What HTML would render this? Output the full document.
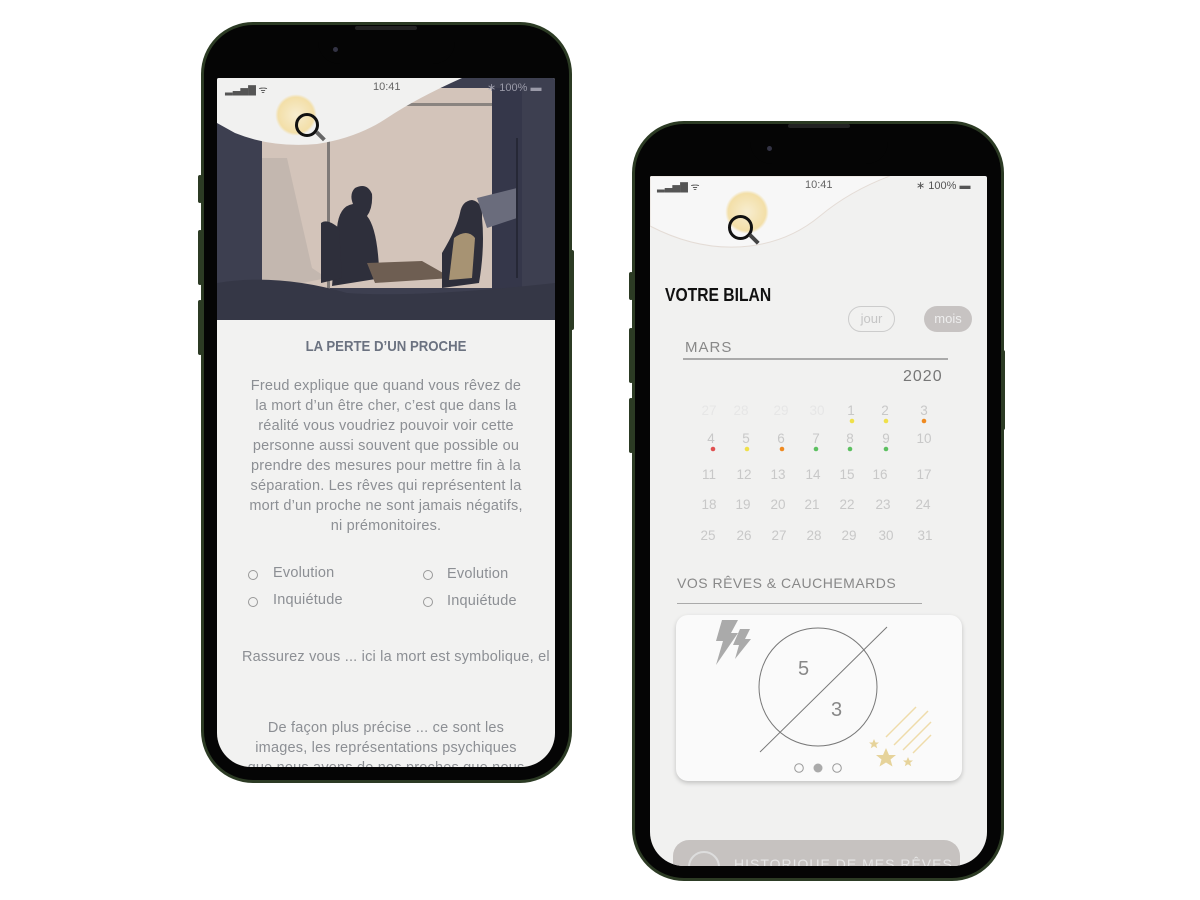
<!DOCTYPE html>
<html><head><meta charset="utf-8"><style>
*{margin:0;padding:0;box-sizing:border-box}
body{width:1200px;height:900px;background:#fff;position:relative;overflow:hidden;font-family:"Liberation Sans","DejaVu Sans",sans-serif}
.a{position:absolute}
.frame{position:absolute;background:#2c3b24;border-radius:52px}
.bez{position:absolute;left:3px;top:3px;right:3px;bottom:3px;background:#050505;border-radius:49px}
.scr{position:absolute;overflow:hidden;background:#f2f2f1;border-radius:2px 2px 34px 34px}
.notch{position:absolute;background:#050505;border-radius:0 0 22px 22px}
.t{position:absolute;white-space:nowrap}
.btn{position:absolute;background:#2c3b24;width:4px;border-radius:2px}
.body{font-size:14.5px;letter-spacing:.2px;line-height:20px;color:#8c8f94;text-align:center}
</style></head><body>

<!-- LEFT PHONE -->
<div class="btn" style="left:198px;top:175px;height:28px"></div>
<div class="btn" style="left:198px;top:230px;height:55px"></div>
<div class="btn" style="left:198px;top:300px;height:55px"></div>
<div class="btn" style="left:570px;top:250px;height:80px"></div>
<div class="frame" style="left:201px;top:22px;width:371px;height:761px"><div class="bez"></div></div>
<div class="a" style="left:355px;top:26px;width:62px;height:4px;background:#222;border-radius:2px"></div>
<div class="scr" style="left:217px;top:78px;width:338px;height:689px">
 <svg class="a" style="left:0;top:0" width="338" height="242" viewBox="0 0 338 242">
  <rect width="338" height="242" fill="#3d3f50"/>
  <rect x="45" y="10" width="240" height="200" fill="#d3c4ba"/>
  <rect x="110" y="40" width="3" height="172" fill="#7f7a78"/>
  <rect x="45" y="25" width="240" height="3" fill="#8a8480"/>
  <path d="M45 80 L70 80 L95 190 L110 200 L60 210 L45 210Z" fill="#bfb4ac" opacity=".8"/>
  <rect x="275" y="10" width="30" height="210" fill="#35374a"/>
  <path d="M120 150 Q122 128 136 126 Q132 116 138 110 Q150 104 155 116 Q156 130 150 138 Q160 150 162 190 L165 200 L115 208Z" fill="#2e2f3b"/>
  <path d="M104 145 Q110 140 122 150 L125 200 L104 205Z" fill="#2e2f3b"/>
  <path d="M150 185 L205 183 L235 200 L158 205Z" fill="#6e5e52"/>
  <path d="M225 175 Q240 150 243 135 Q245 123 255 122 Q266 124 265 140 Q268 170 262 205 L225 210Z" fill="#2e2f3b"/>
  <path d="M237 160 Q250 150 258 160 L255 200 L232 202Z" fill="#c6ad82" opacity=".8"/>
  <path d="M260 120 L300 110 L300 140 L270 150Z" fill="#6a6c7c"/>
  <path d="M0 205 Q60 195 130 215 Q200 220 338 205 L338 242 L0 242Z" fill="#353746"/>
  <path d="M0 0 L245 0 Q200 20 170 40 Q140 60 100 66 Q55 70 18 55 L0 45Z" fill="#f1f1f0"/>
  <line x1="300" y1="60" x2="300" y2="200" stroke="#262836" stroke-width="2"/>
 </svg>
 <div class="t" style="left:8px;top:4px;font-size:10px;color:#555">▂▃▅▇ ᯤ</div>
 <div class="t" style="left:156px;top:3px;font-size:11px;color:#666">10:41</div>
 <div class="t" style="left:270px;top:3px;font-size:11px;color:#9a9aa8">∗ 100% ▬</div>
 <div class="a" style="left:58px;top:16px;width:42px;height:42px;border-radius:50%;background:radial-gradient(circle,#f7edd0 0,#f3dfa8 60%,rgba(255,255,255,0) 70%)"></div>
 <div class="a" style="left:78px;top:35px;width:24px;height:24px;border-radius:50%;border:3px solid #111"></div>
 <div class="a" style="left:98px;top:56px;width:11px;height:4px;background:#666;transform:rotate(45deg)"></div>
 <div class="t" style="left:0;width:338px;top:260px;text-align:center;font-weight:bold;font-size:15px;color:#6b7280;transform:scaleX(.88)">LA PERTE D’UN PROCHE</div>
 <div class="a body" style="left:26px;width:286px;top:298px">Freud explique que quand vous rêvez de la mort d’un être cher, c’est que dans la réalité vous voudriez pouvoir voir cette personne aussi souvent que possible ou prendre des mesures pour mettre fin à la séparation. Les rêves qui représentent la mort d’un proche ne sont jamais négatifs, ni prémonitoires.</div>
 <div class="a" style="left:31px;top:492px;width:10px;height:10px;border:1px solid #999;border-radius:50%"></div>
 <div class="a" style="left:31px;top:519px;width:10px;height:10px;border:1px solid #999;border-radius:50%"></div>
 <div class="a" style="left:206px;top:492px;width:10px;height:10px;border:1px solid #999;border-radius:50%"></div>
 <div class="a" style="left:206px;top:519px;width:10px;height:10px;border:1px solid #999;border-radius:50%"></div>
 <div class="t" style="left:56px;top:487px;font-size:14.5px;letter-spacing:.2px;color:#8c8f94">Evolution</div>
 <div class="t" style="left:56px;top:514px;font-size:14.5px;letter-spacing:.2px;color:#8c8f94">Inquiétude</div>
 <div class="t" style="left:230px;top:488px;font-size:14.5px;letter-spacing:.2px;color:#8c8f94">Evolution</div>
 <div class="t" style="left:230px;top:515px;font-size:14.5px;letter-spacing:.2px;color:#8c8f94">Inquiétude</div>
 <div class="t" style="left:25px;top:571px;font-size:14.5px;letter-spacing:.2px;color:#8c8f94">Rassurez vous ... ici la mort est symbolique, el</div>
 <div class="a body" style="left:26px;width:286px;top:640px">De façon plus précise ... ce sont les images, les représentations psychiques que nous avons de nos proches que nous</div>
</div>
<div class="notch" style="left:318px;top:36px;width:137px;height:28px"></div>
<div class="a" style="left:333px;top:47px;width:5px;height:5px;background:#334;border-radius:50%"></div>

<!-- RIGHT PHONE -->
<div class="btn" style="left:629px;top:272px;height:28px"></div>
<div class="btn" style="left:629px;top:328px;height:55px"></div>
<div class="btn" style="left:629px;top:398px;height:55px"></div>
<div class="btn" style="left:1001px;top:350px;height:80px"></div>
<div class="frame" style="left:632px;top:121px;width:372px;height:760px"><div class="bez"></div></div>
<div class="a" style="left:788px;top:124px;width:62px;height:4px;background:#222;border-radius:2px"></div>
<div class="scr" style="left:650px;top:176px;width:337px;height:690px;background:#f1f1f0">
 <svg class="a" style="left:0;top:0" width="337" height="90" viewBox="0 0 337 90">
  <path d="M0 0 L240 0 Q200 15 170 40 Q140 65 100 70 Q50 76 0 50Z" fill="#f7f7f7" stroke="#e4dcd6" stroke-width="1"/>
 </svg>
 <div class="t" style="left:7px;top:3px;font-size:10px;color:#555">▂▃▅▇ ᯤ</div>
 <div class="t" style="left:155px;top:3px;font-size:11px;color:#666">10:41</div>
 <div class="t" style="left:266px;top:3px;font-size:11px;color:#555">∗ 100% ▬</div>
 <div class="a" style="left:75px;top:14px;width:44px;height:44px;border-radius:50%;background:radial-gradient(circle,#f7edd0 0,#f3dfa8 60%,rgba(255,255,255,0) 70%)"></div>
 <div class="a" style="left:78px;top:39px;width:25px;height:25px;border-radius:50%;border:3px solid #111"></div>
 <div class="a" style="left:98px;top:61px;width:12px;height:4px;background:#444;transform:rotate(45deg)"></div>
 <div class="t" style="left:15px;top:109px;font-weight:bold;font-size:18px;color:#111;transform:scaleX(.87);transform-origin:left">VOTRE BILAN</div>
 <div class="t" style="left:198px;top:130px;width:47px;height:26px;border:1px solid #ccc;border-radius:13px;text-align:center;line-height:24px;font-size:13px;color:#c5c5c5">jour</div>
 <div class="t" style="left:274px;top:130px;width:48px;height:26px;background:#c7c3c2;border-radius:13px;text-align:center;line-height:26px;font-size:13px;color:#eee">mois</div>
 <div class="t" style="left:35px;top:163px;font-size:15px;letter-spacing:1px;color:#888">MARS</div>
 <div class="a" style="left:33px;top:182px;width:265px;height:2px;background:#aaa"></div>
 <div class="t" style="left:253px;top:192px;font-size:16px;letter-spacing:1px;color:#777">2020</div>
 <svg class="a" style="left:0;top:220px" width="337" height="150" font-family="Liberation Sans, sans-serif" font-size="13.5" text-anchor="middle">
  <g fill="#e6e6e6"><text x="59" y="19">27</text><text x="91" y="19">28</text><text x="131" y="19">29</text><text x="167" y="19">30</text></g>
  <g fill="#c8c8c8">
  <text x="201" y="19">1</text><text x="235" y="19">2</text><text x="274" y="19">3</text>
  <text x="61" y="47">4</text><text x="96" y="47">5</text><text x="131" y="47">6</text><text x="166" y="47">7</text><text x="200" y="47">8</text><text x="236" y="47">9</text><text x="274" y="47">10</text>
  <text x="59" y="83">11</text><text x="94" y="83">12</text><text x="128" y="83">13</text><text x="163" y="83">14</text><text x="197" y="83">15</text><text x="230" y="83">16</text><text x="274" y="83">17</text>
  <text x="59" y="113">18</text><text x="93" y="113">19</text><text x="128" y="113">20</text><text x="162" y="113">21</text><text x="197" y="113">22</text><text x="233" y="113">23</text><text x="273" y="113">24</text>
  <text x="58" y="144">25</text><text x="94" y="144">26</text><text x="129" y="144">27</text><text x="164" y="144">28</text><text x="199" y="144">29</text><text x="236" y="144">30</text><text x="275" y="144">31</text></g>
  <circle cx="202" cy="25" r="2.3" fill="#efe04a"/><circle cx="236" cy="25" r="2.3" fill="#efe04a"/><circle cx="274" cy="25" r="2.3" fill="#ef8a20"/>
  <circle cx="63" cy="53" r="2.3" fill="#e05050"/><circle cx="97" cy="53" r="2.3" fill="#efe04a"/><circle cx="132" cy="53" r="2.3" fill="#ef8a20"/><circle cx="166" cy="53" r="2.3" fill="#5cc060"/><circle cx="200" cy="53" r="2.3" fill="#5cc060"/><circle cx="236" cy="53" r="2.3" fill="#5cc060"/>
 </svg>
 <div class="t" style="left:27px;top:399px;font-size:14px;letter-spacing:.5px;color:#888">VOS RÊVES &amp; CAUCHEMARDS</div>
 <div class="a" style="left:27px;top:427px;width:245px;height:1px;background:#aaa"></div>
 <div class="a" style="left:26px;top:439px;width:286px;height:166px;background:#fafafa;border-radius:12px;box-shadow:0 2px 5px rgba(0,0,0,.2)"></div>
 <svg class="a" style="left:26px;top:439px" width="286" height="166">
  <path d="M46 5 L62 5 L55 18 L62 18 L40 50 L47 26 L40 26Z" fill="#aaa"/>
  <path d="M64 14 L74 14 L69 24 L75 24 L59 44 L63 30 L57 30Z" fill="#aaa"/>
  <circle cx="142" cy="72" r="59" fill="none" stroke="#777" stroke-width="1"/>
  <line x1="84" y1="137" x2="211" y2="12" stroke="#777" stroke-width="1"/>
  <text x="122" y="60" font-size="20" fill="#888" font-family="Liberation Sans,sans-serif">5</text>
  <text x="155" y="101" font-size="20" fill="#888" font-family="Liberation Sans,sans-serif">3</text>
  <g stroke="#efdcaa" stroke-width="1.5"><line x1="210" y1="122" x2="240" y2="92"/><line x1="218" y1="130" x2="252" y2="96"/><line x1="227" y1="135" x2="255" y2="107"/><line x1="237" y1="138" x2="255" y2="120"/></g>
  <path d="M210 133 l3 7 7 0 -5.5 4.5 2 7 -6.5 -4 -6.5 4 2 -7 -5.5 -4.5 7 0z" fill="#e6d39a"/>
  <path d="M198 124 l1.5 3.5 3.5 0 -2.8 2.3 1 3.5 -3.2 -2 -3.2 2 1 -3.5 -2.8 -2.3 3.5 0z" fill="#e6d39a"/>
  <path d="M232 142 l1.5 3.5 3.5 0 -2.8 2.3 1 3.5 -3.2 -2 -3.2 2 1 -3.5 -2.8 -2.3 3.5 0z" fill="#e6d39a"/>
  <circle cx="123" cy="153" r="4.3" fill="none" stroke="#999"/><circle cx="142" cy="153" r="4.5" fill="#aaa"/><circle cx="161" cy="153" r="4.3" fill="none" stroke="#999"/>
 </svg>
 <div class="a" style="left:23px;top:664px;width:287px;height:50px;background:#c6c2c0;border-radius:16px"></div>
 <div class="a" style="left:38px;top:675px;width:32px;height:32px;border:2px solid #ddd;border-radius:50%"></div>
 <div class="t" style="left:84px;top:680px;font-size:14px;letter-spacing:1px;color:#e6e6e6">HISTORIQUE DE MES RÊVES</div>
</div>
<div class="notch" style="left:750px;top:134px;width:138px;height:30px"></div>
<div class="a" style="left:767px;top:146px;width:5px;height:5px;background:#334;border-radius:50%"></div>
</body></html>
